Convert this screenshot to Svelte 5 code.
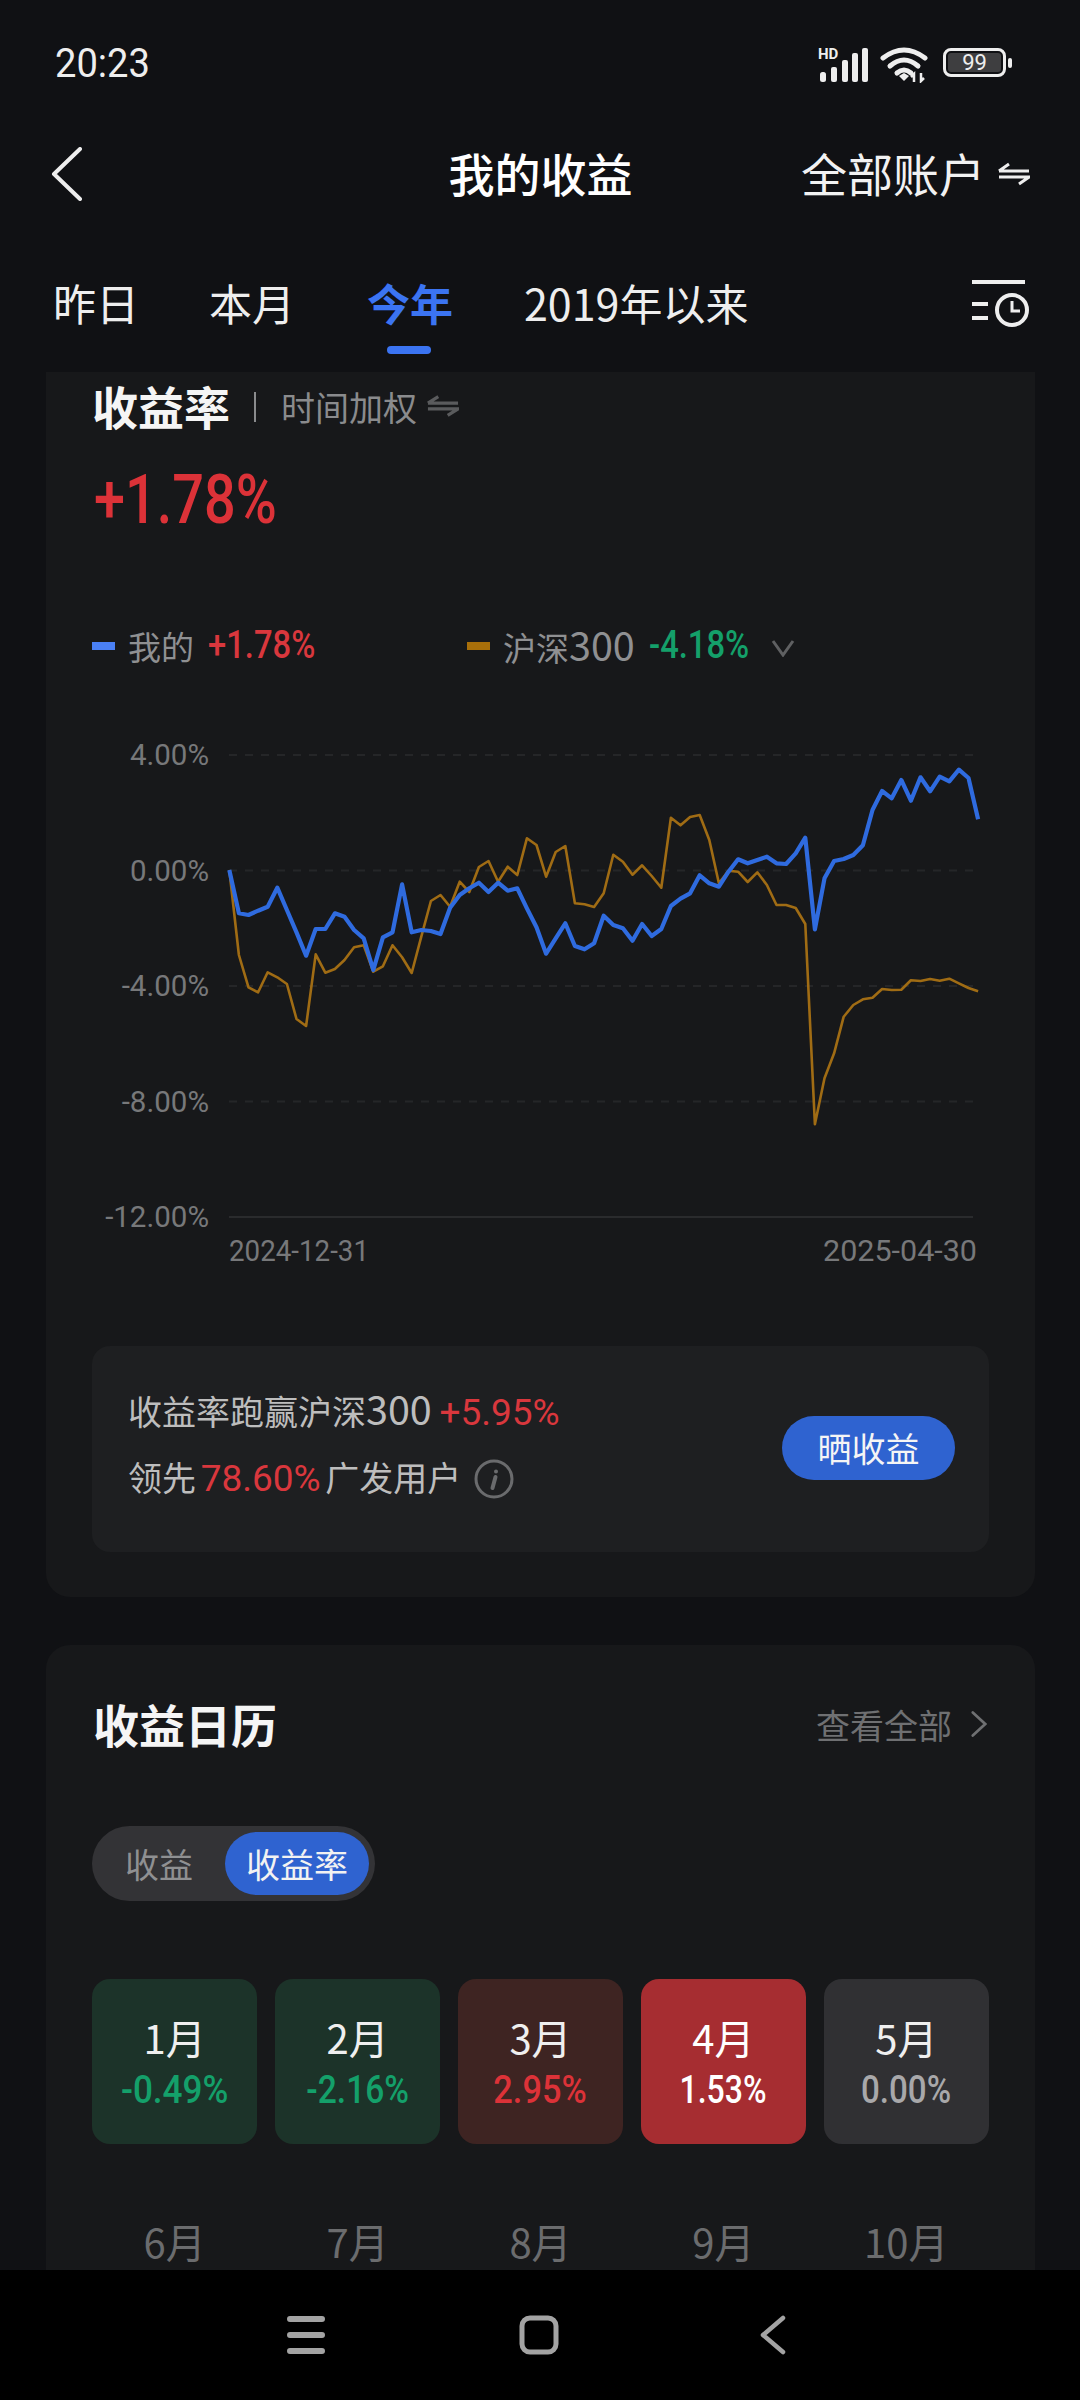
<script>
  const blue = [450,580,585,572,560,503,570,637,707,627,627,580,590,630,655,750,652,637,493,637,630,633,642,563,525,505,488,516,488,512,505,565,622,701,655,610,678,688,670,587,615,
    625,662,612,648,627,558,536,520,466,490,500,455,418,430,420,410,430,432,400,353,628,475,423,417,405,376,270,213,235,180,242,172,214,170,184,149,174,298];
  const gold = [450,705,802,817,757,772,792,897,918,703,758,747,720,682,676,755,739,676,712,759,650,543,525,560,485,516,441,423,485,440,465,355,375,470,396,378,550,553,561,520,404,
    425,464,436,468,503,293,316,291,285,360,490,452,455,486,457,495,555,555,564,612,1213,1075,1000,890,855,838,833,807,810,809,781,783,777,782,776,790,804,814];
  const toPoints = (arr) => arr.map((v, i) => `${(229.3 + i * 9.6).toFixed(1)},${(v / 3).toFixed(1)}`).join(' ');
  const axis = [['4.00%', 35], ['0.00%', 150.5], ['-4.00%', 266], ['-8.00%', 381.5], ['-12.00%', 497]];
  const months = [
    { m: '1月', v: '-0.49%', c: 'down', sx: 0.9 },
    { m: '2月', v: '-2.16%', c: 'down', sx: 0.86 },
    { m: '3月', v: '2.95%', c: 'up', sx: 0.88 },
    { m: '4月', v: '1.53%', c: 'hot', sx: 0.82 },
    { m: '5月', v: '0.00%', c: 'flat', sx: 0.85 }
  ];
  const future = ['6月', '7月', '8月', '9月', '10月'];
</script>

<div class="app">
  <div class="status">
    <span class="time num">20:23</span>
    <div class="sys">
      <svg class="signal" width="52" height="36" viewBox="0 -2 52 36">
        <text x="0" y="11" class="hd">HD</text>
        <rect x="2" y="24" width="6" height="10" rx="2.5" />
        <rect x="13" y="19" width="6" height="15" rx="2" />
        <rect x="24" y="12" width="6" height="22" rx="2" />
        <rect x="34" y="5" width="6" height="29" rx="2" />
        <rect x="44" y="0" width="6" height="34" rx="2" />
      </svg>
      <svg class="wifi" width="48" height="36" viewBox="0 0 48 36">
        <g fill="none" stroke="#eee" stroke-width="5" stroke-linecap="round">
          <path d="M3 11 Q24 -5 45 11" />
          <path d="M10 19 Q24 7 38 19" />
          <path d="M17 26 Q24 20 31 26" />
        </g>
        <path d="M19 29 L24 26 L29 29 L24 34 Z" fill="#eee" />
        <path d="M34 35 V27 L31 30 M41 26 V34 L44 31" fill="none" stroke="#eee" stroke-width="2.5" />
      </svg>
      <div class="battery">
        <div class="cell-box"><span class="batt-fill num">99</span></div>
        <i class="nub"></i>
      </div>
    </div>
  </div>

  <div class="header">
    <svg class="back" width="32" height="54" viewBox="0 0 32 54">
      <path d="M29 2 L3 27 L29 52" fill="none" stroke="#eee" stroke-width="4" stroke-linecap="round" stroke-linejoin="round" />
    </svg>
    <h1>我的收益</h1>
    <div class="acct">
      <span>全部账户</span>
      <svg width="32" height="24" viewBox="0 0 32 24" class="swap">
        <path d="M1 9 L11 2 M1 9 H31 M1 15 H31 L21 22" fill="none" stroke="#eee" stroke-width="3" />
      </svg>
    </div>
  </div>

  <div class="tabs">
    <span class="tab t1">昨日</span>
    <span class="tab t2">本月</span>
    <span class="tab active">今年<i class="bar"></i></span>
    <span class="tab t4">2019年以来</span>
    <svg class="hist" width="60" height="48" viewBox="0 0 60 48">
      <g fill="none" stroke="#eee" stroke-width="4">
        <path d="M2 3 H55 M2 25 H18 M2 39 H18" />
        <circle cx="42" cy="31" r="15" />
        <path d="M42 22 V32 H50" stroke-width="3" />
      </g>
    </svg>
  </div>

  <div class="scroll">
    <section class="card first">
      <div class="title-row">
        <h2>收益率</h2>
        <i class="sep"></i>
        <span class="sub">时间加权</span>
        <svg width="32" height="24" viewBox="0 0 34 24">
          <path d="M1 9 L12 2 M1 9 H33 M1 15 H33 L22 22" fill="none" stroke="#5a5b5d" stroke-width="3.5" />
        </svg>
      </div>
      <div class="big"><span class="big-v num">+1.78%</span></div>
      <div class="legend">
        <div class="lg lg1">
          <i class="swatch blue"></i><span class="lbl">我的</span><span class="lv num red">+1.78%</span>
        </div>
        <div class="lg">
          <i class="swatch gold"></i><span class="lbl lift">沪深<span class="d">300</span></span><span class="lv num green">-4.18%</span>
          <svg width="26" height="18" viewBox="0 0 24 18" class="chev">
            <path d="M2 2 L12 16 L22 2" fill="none" stroke="#5f6062" stroke-width="3" />
          </svg>
        </div>
      </div>
      <svg class="chart" width="989" height="560" viewBox="46 720 989 560">
        <g transform="translate(0 720)">
          {#each axis as [label, y], i}
            {#if i < 4}
              <line x1="229" x2="973" y1={y} y2={y} class="grid" />
            {:else}
              <line x1="229" x2="973" y1={y} y2={y} class="base" />
            {/if}
            <text x="209" y={y + 10} text-anchor="end" class="ax">{label}</text>
          {/each}
          <polyline points={toPoints(gold)} class="gold-line" />
          <polyline points={toPoints(blue)} class="blue-line" />
          <text x="229" y="541" class="ax" textLength="140" lengthAdjust="spacingAndGlyphs">2024-12-31</text>
          <text x="823" y="541" class="ax" textLength="154" lengthAdjust="spacingAndGlyphs">2025-04-30</text>
        </g>
      </svg>
      <div class="box">
        <div class="box-text">
          <p>收益率跑赢沪深<span class="d">300</span> <span class="red">+5.95%</span></p>
          <p class="tight">领先 <span class="red">78.60%</span> 广发用户
            <svg class="info" width="40" height="40" viewBox="0 0 40 40">
              <circle cx="20" cy="20" r="18" fill="none" stroke="#6a6b6d" stroke-width="3" />
              <path d="M22 12.5 v.1 M21.5 18 L18.5 29" stroke="#6a6b6d" stroke-width="4" stroke-linecap="round" fill="none" />
            </svg>
          </p>
        </div>
        <div class="share">晒收益</div>
      </div>
    </section>

    <section class="card second">
      <div class="cal-head">
        <h2>收益日历</h2>
        <div class="more">
          <span>查看全部</span>
          <svg width="16" height="30" viewBox="0 0 18 30">
            <path d="M2 2 L16 15 L2 28" fill="none" stroke="#6f7072" stroke-width="3" stroke-linecap="round" />
          </svg>
        </div>
      </div>
      <div class="toggle">
        <span class="opt">收益</span>
        <span class="opt on">收益率</span>
      </div>
      <div class="months">
        {#each months as x}
          <div class="month {x.c}">
            <span class="mn">{x.m}</span>
            <span class="mv num" style="transform: scaleX({x.sx})">{x.v}</span>
          </div>
        {/each}
        {#each future as m}
          <div class="month idle"><span class="mn">{m}</span></div>
        {/each}
      </div>
    </section>
  </div>

  <div class="nav">
    <svg width="38" height="38" viewBox="0 0 38 38">
      <path d="M3 3 H35 M3 19 H35 M3 35 H35" stroke="#a3a3a3" stroke-width="6" stroke-linecap="round" />
    </svg>
    <svg width="40" height="40" viewBox="0 0 40 40">
      <rect x="3" y="3" width="34" height="34" rx="8" fill="none" stroke="#a3a3a3" stroke-width="5" />
    </svg>
    <svg width="26" height="40" viewBox="0 0 26 40">
      <path d="M23 3 L3 20 L23 37" fill="none" stroke="#a3a3a3" stroke-width="4.5" stroke-linecap="round" stroke-linejoin="round" />
    </svg>
  </div>
</div>

<style>
  :global(body) { margin: 0; background: #101114; }
  .app {
    width: 1080px; height: 2400px; display: flex; flex-direction: column; overflow: hidden;
    background: #101114; color: #eee;
    font-family: "Noto Sans CJK SC", "Roboto", sans-serif;
  }
  .num { font-family: "Roboto", sans-serif; display: inline-block; white-space: nowrap; }
  h1, h2, p { margin: 0; font-weight: inherit; }
  i { display: block; }
  .d { font-size: 39.5px; }

  .status { height: 125px; flex: none; display: flex; justify-content: space-between; align-items: flex-start; padding: 0 68px 0 55px; box-sizing: border-box; }
  .time { font-size: 41px; line-height: 40px; margin-top: 43px; transform: scaleX(.93); transform-origin: left; }
  .sys { display: flex; align-items: flex-start; margin-top: 46px; }
  .signal { fill: #eee; margin-right: 10px; margin-top: 0; overflow: visible; }
  .hd { font: 700 15px "Roboto", sans-serif; fill: #eee; }
  .wifi { margin-right: 15px; margin-top: 1px; }
  .battery { display: flex; align-items: center; margin-top: 2px; }
  .cell-box { width: 63px; height: 29px; border: 3px solid #eee; border-radius: 8px; box-sizing: border-box; padding: 2px; }
  .batt-fill { display: block; height: 19px; background: #3e3e40; border-radius: 3px; text-align: center; font-size: 22px; line-height: 19px; color: #eee; }
  .nub { width: 4px; height: 10px; border-radius: 2px; background: #eee; margin-left: 2px; }

  .header { height: 95px; flex: none; display: grid; grid-template-columns: 1fr auto 1fr; align-items: center; padding: 0 50px 0 51px; margin-top: 1px; }
  h1 { font-size: 46px; font-weight: 500; color: #fff; line-height: 60px; margin-top: -4px; }
  .acct { justify-self: end; display: flex; align-items: center; font-size: 46px; gap: 13px; line-height: 60px; color: #f2f2f2; }
  .acct span { margin-top: -3px; }

  .tabs { height: 151px; flex: none; display: flex; align-items: flex-start; padding: 0 50px 0 53px; box-sizing: border-box; font-size: 43px; line-height: 56px; }
  .tab { position: relative; margin-top: 53px; }
  .t2 { margin-left: 70px; }
  .active { margin-left: 72px; color: #3b74f2; font-weight: 700; }
  .t4 { margin-left: 71px; }
  .bar { position: absolute; left: 20px; bottom: -24px; width: 44px; height: 8px; border-radius: 4px; background: #3b74f2; }
  .hist { margin-left: auto; margin-top: 58px; }

  .scroll { flex: 1; min-height: 0; overflow: hidden; padding: 0 45px 0 46px; display: flex; flex-direction: column; gap: 48px; }
  .card { background: #17181a; border-radius: 24px; flex: none; }
  .first { border-radius: 0 0 24px 24px; padding: 4px 0 45px; }
  .title-row { height: 60px; display: flex; align-items: center; padding-left: 46px; }
  h2 { font-size: 46px; font-weight: 700; color: #f5f5f5; line-height: 60px; margin-top: -3px; }
  .sep { width: 2px; height: 30px; background: #8a8b8d; margin: 2px 25px 0 24px; }
  .sub { font-size: 34px; color: #8a8b8d; margin-right: 10px; }
  .big { margin: 24px 0 0 48px; height: 80px; line-height: 80px; }
  .big-v { font-size: 69px; font-weight: 500; color: #dc3238; transform: scaleX(.81); transform-origin: left; }
  .legend { margin: 81px 0 0 46px; height: 50px; display: flex; align-items: center; }
  .lg { display: flex; align-items: center; }
  .lg1 { width: 375px; }
  .swatch { width: 23px; height: 8px; margin-right: 13px; }
  .blue { background: #4a80f5; }
  .gold { background: #a86f0a; }
  .lbl { font-size: 33px; color: #8f9092; margin-right: 14px; }
  .lift { margin-top: -5px; }
  .lv { font-size: 39px; font-weight: 500; transform: scaleX(.84); transform-origin: left; width: 107px; line-height: 50px; margin-top: -2px; }
  .chev { margin-left: 14px; margin-top: 4px; }
  .red { color: #d9373d; }
  .green { color: #14a06a; }

  .chart { display: block; margin-top: 49px; }
  .grid { stroke: #252628; stroke-width: 2; stroke-dasharray: 8 8; }
  .base { stroke: #2a2b2d; stroke-width: 2; }
  .ax { font: 29.5px "Roboto", sans-serif; fill: #77787a; }
  .gold-line { fill: none; stroke: #a06c14; stroke-width: 2.6; stroke-linejoin: round; }
  .blue-line { fill: none; stroke: #2f6bdf; stroke-width: 4.2; stroke-linejoin: round; }

  .box { margin: 66px 46px 0; height: 206px; box-sizing: border-box; background: #1e1f21; border-radius: 18px; display: flex; align-items: center; justify-content: space-between; padding: 0 34px 0 36px; }
  .box-text { font-size: 34px; color: #bdbdbd; line-height: 64px; margin-top: -12px; }
  .box-text .red { font-family: "Roboto", sans-serif; font-size: 37px; }
  .tight { word-spacing: -3px; }
  .info { vertical-align: middle; margin-left: 8px; margin-top: -4px; }
  .share { width: 173px; height: 64px; border-radius: 32px; background: #2f63d0; color: #f5f5f5; font-size: 34px; line-height: 64px; text-align: center; margin-top: -2px; }

  .second { padding: 49px 46px 40px; border-radius: 24px 24px 0 0; }
  .cal-head { height: 60px; display: flex; align-items: center; justify-content: space-between; padding-left: 1px; }
  .more { display: flex; align-items: center; gap: 19px; font-size: 34px; color: #6f7072; margin-right: 2px; }
  .toggle { margin-top: 72px; width: 283px; height: 75px; background: #333336; border-radius: 38px; box-sizing: border-box; padding: 6px; display: flex; align-items: center; font-size: 34px; color: #8f9092; }
  .opt { width: 122px; text-align: center; }
  .on { width: 144px; height: 63px; line-height: 63px; border-radius: 32px; background: #2f63d0; color: #f2f2f2; margin-left: 5px; }
  .months { margin-top: 78px; display: grid; grid-template-columns: repeat(5, 1fr); column-gap: 17.5px; row-gap: 41px; }
  .month { height: 165px; border-radius: 18px; display: flex; flex-direction: column; align-items: center; padding-top: 33px; box-sizing: border-box; }
  .mn { font-size: 40px; line-height: 50px; color: #efefef; }
  .mv { font-size: 39px; font-weight: 500; line-height: 50px; margin-top: 3px; }
  .down { background: #1c3329; }
  .down .mv { color: #14a06a; }
  .up { background: #3e2422; }
  .up .mv { color: #dc3238; }
  .hot { background: #a62d31; }
  .hot .mv { color: #fff; }
  .hot .mn { color: #fff; }
  .flat { background: #303033; }
  .flat .mv { color: #a8a8aa; }
  .idle { height: 80px; padding-top: 31px; }
  .idle .mn { color: #6b6c6e; }

  .nav { height: 130px; flex: none; background: #000; display: flex; align-items: center; padding: 0 0 0 287px; box-sizing: border-box; }
  .nav svg:nth-child(2) { margin-left: 194px; }
  .nav svg:nth-child(3) { margin-left: 201px; }
</style>
